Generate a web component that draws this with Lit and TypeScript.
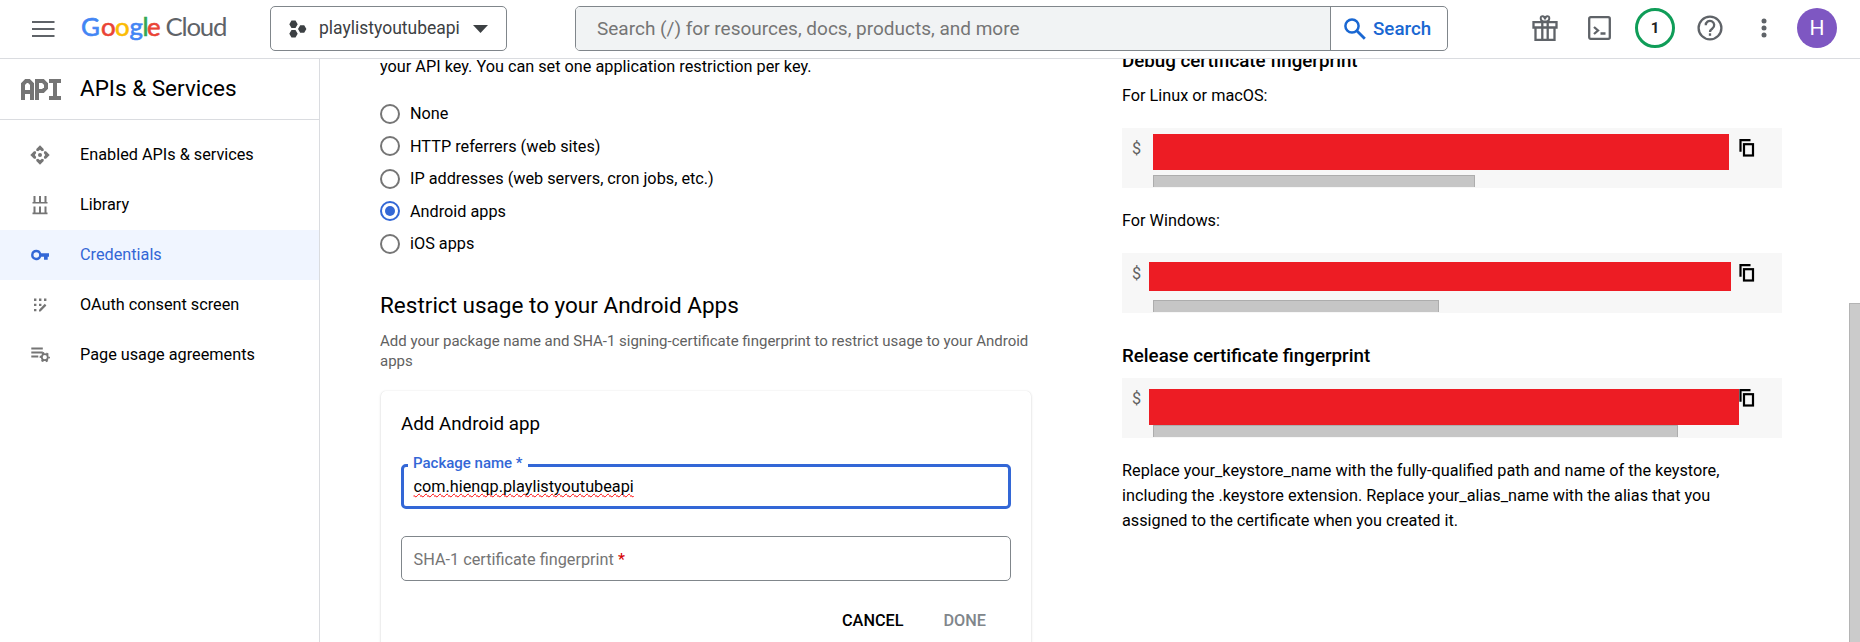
import { LitElement, html, css, svg } from "lit";
import { customElement } from "lit/decorators.js";
import { classMap } from "lit/directives/class-map.js";
import { styleMap } from "lit/directives/style-map.js";

const navIcons = {
  enabled: svg`<g fill="#757575"><circle cx="10" cy="10" r="2"/><path d="M10 .3 13.700 4v1.700L11.900 6.200 10 4.800 8.100 6.200 6.300 5.700V4z"/><path d="M10 19.700 13.700 16v-1.700l-1.800-.5-1.900 1.400-1.900-1.400-1.800.5V16z"/><path d="M.3 10 4 6.300h1.700l.5 1.800L4.800 10l1.400 1.900-.5 1.800H4z"/><path d="M19.700 10 16 6.300h-1.700l-.5 1.800 1.400 1.900-1.400 1.900.5 1.800H16z"/></g>`,
  library: svg`<g fill="#757575"><path d="M3.500 1h2v6h-2zM9 1h2v6H9zM14.500 1h2v6h-2zM2.500 7h15v1.600h-15zM3.500 11.600h2v6h-2zM9 11.600h2v6H9zM14.500 11.600h2v6h-2zM2.500 17.600h15v1.600h-15z"/></g>`,
  key: svg`<path fill="#3367d6" fill-rule="evenodd" d="M6.300 4.800a5.200 5.200 0 1 0 4.900 7h2.800v2.900h3.700v-2.900H19V8.200h-7.800a5.200 5.200 0 0 0-4.900-3.400zm0 2.400a2.800 2.800 0 1 1 0 5.600 2.800 2.800 0 0 1 0-5.600z"/>`,
  consent: svg`<g fill="#757575"><path d="M4 3.500h2.400v2.400H4zM9 3.500h2.400v2.400H9zM14 3.500h2.400v2.400H14zM4 8.700h2.400v2.400H4zM9 8.700h2.400v2.400H9zM4 13.900h2.400v2.400H4z"/><path d="m9 14.800 5.800-6 1.600 1.600-5.900 6H9z"/></g>`,
  agreements: svg`<g fill="#757575"><path d="M1.300 2.600h11.500v2H1.300zM1.300 6.600h11.500v2H1.300zM1.300 10.600h7v2h-7z"/></g><circle cx="14.800" cy="12.200" r="3" fill="none" stroke="#757575" stroke-width="1.800"/><circle cx="14.800" cy="12.200" r="4.300" fill="none" stroke="#757575" stroke-width="1.700" stroke-dasharray="2.200 2.300" stroke-dashoffset="1.100"/>`,
};

const navItems = [
  { icon: navIcons.enabled, label: "Enabled APIs & services" },
  { icon: navIcons.library, label: "Library" },
  { icon: navIcons.key, label: "Credentials", active: true },
  { icon: navIcons.consent, label: "OAuth consent screen" },
  { icon: navIcons.agreements, label: "Page usage agreements" },
];

@customElement("top-bar")
class TopBar extends LitElement {
  static styles = css`
    :host { display: flex; height: 58px; flex: none; border-bottom: 1px solid #dadce0; background: #fff; color: #3c4043; padding: 0 23px 0 28px; }
    svg { display: block; flex: none; }
    .menu { margin-top: 14px; }
    .logo { margin: 10px 0 0 22px; font-family: Lato, sans-serif; overflow: visible; }
    .picker { box-sizing: border-box; width: 237px; height: 45px; margin: 6px 0 0 40px; border: 1px solid #80868b; border-radius: 5px; display: flex; align-items: center; padding: 0 18px; }
    .project { font-size: 17.500px; margin-left: 12px; flex: 1; line-height: 24px; margin-top: -2px; white-space: nowrap; }
    .search { box-sizing: border-box; width: 873px; height: 45px; margin: 6px 0 0 68px; border: 1px solid #80868b; border-radius: 5px; display: flex; overflow: hidden; }
    .query { flex: 1; background: #f1f3f4; border-right: 1px solid #80868b; padding-left: 21px; font-size: 19px; line-height: 43px; color: #757575; }
    .go { width: 116px; display: flex; align-items: center; color: #1967d2; font-size: 18.750px; font-weight: 500; padding-left: 13px; box-sizing: border-box; gap: 7px; }
    .tools { margin-left: auto; display: flex; align-items: center; height: 56px; }
    .quota { box-sizing: border-box; width: 40px; height: 40px; border: 3px solid #0f9d58; border-radius: 50%; text-align: center; line-height: 34px; font-size: 15px; font-weight: 700; color: #202124; margin: 0 22px 0 24px; }
    .avatar { width: 40px; height: 40px; border-radius: 50%; background: #7e57c2; color: #fff; text-align: center; line-height: 41px; font-size: 21px; margin-left: 30px; }
    .gift { margin-right: 30px; }
    .dots { margin-left: 38px; }
  `;
  render() {
    return html`
      <svg class="menu" width="30" height="30" viewBox="0 0 30 30"><path d="M4 7h22.500v2H4zM4 14h22.500v2H4zM4 21h22.500v2H4z" fill="#5f6368"/></svg>
      <svg class="logo" width="150" height="38" viewBox="0 0 150 38" font-size="25.800">
        <g stroke-width=".6"><text x="1" y="26" fill="#4285f4" stroke="#4285f4">G</text>
        <text x="21" y="26" fill="#ea4335" stroke="#ea4335">o</text>
        <text x="35" y="26" fill="#fbbc04" stroke="#fbbc04">o</text>
        <text x="49.500" y="26" fill="#4285f4" stroke="#4285f4">g</text>
        <text x="62.600" y="26" fill="#34a853" stroke="#34a853">l</text>
        <text x="67" y="26" fill="#ea4335" stroke="#ea4335">e</text></g>
        <text x="85.500" y="26" fill="#5f6368" textLength="62" lengthAdjust="spacing">Cloud</text>
      </svg>
      <div class="picker">
        <svg width="18" height="18" viewBox="0 0 18 18" fill="#3c4043"><path d="M2.500.5h4L8.700 4.200 6.500 8h-4L.3 4.200zM2.500 10h4l2.200 3.700-2.200 3.800h-4L.3 13.700zM11.200 5.200h4l2.200 3.800-2.200 3.700h-4L9 9z"/></svg>
        <span class="project">playlistyoutubeapi</span>
        <svg width="15" height="8" viewBox="0 0 15 8"><path d="M0 0h15L7.500 8z" fill="#3c4043"/></svg>
      </div>
      <div class="search">
        <div class="query">Search (/) for resources, docs, products, and more</div>
        <div class="go">
          <svg width="22" height="22" viewBox="0 0 22 22" fill="none" stroke="#1967d2" stroke-width="2.500"><circle cx="8" cy="8" r="6.600"/><path d="m12.800 12.800 8 8" stroke-width="2.800"/></svg>
          <span>Search</span>
        </div>
      </div>
      <div class="tools">
        <svg class="gift" width="26" height="28" viewBox="0 0 26 28" fill="none" stroke="#5f6368" stroke-width="2.300"><path d="M1.500 8.200h23v5.300h-23zM3.500 13.500h19v12.300h-19zM10.300 8v17.500M15.700 8v17.500"/><path d="M13 7.500C11 7.500 8.700 6.500 8.700 4.200c0-3 4.300-2.600 4.300 1.300 0-3.900 4.300-4.300 4.300-1.300 0 2.300-2.300 3.300-4.300 3.300z" stroke-width="2"/></svg>
        <svg width="23" height="24" viewBox="0 0 23 24" fill="none" stroke="#5f6368" stroke-width="2.300"><rect x="1.200" y="1.200" width="20.600" height="21.600" rx="1.500"/><path d="m6 11 4 3.500L6 18M12.500 17.500h5"/></svg>
        <div class="quota">1</div>
        <svg width="26" height="26" viewBox="0 0 26 26" fill="none" stroke="#5f6368" stroke-width="2.300"><circle cx="13" cy="13" r="11.400"/><path d="M8.800 10.300a4.200 4.200 0 1 1 6.700 3.100c-1.500 1.100-2.500 1.800-2.500 3.600"/><path d="M13 18.300v2.500"/></svg>
        <svg class="dots" width="6" height="20" viewBox="0 0 6 20" fill="#5f6368"><circle cx="3" cy="3" r="2.500"/><circle cx="3" cy="10" r="2.500"/><circle cx="3" cy="17" r="2.500"/></svg>
        <div class="avatar">H</div>
      </div>`;
  }
}

@customElement("side-nav")
class SideNav extends LitElement {
  static styles = css`
    :host { display: block; width: 319px; flex: none; border-right: 1px solid #dadce0; font-size: 16.250px; }
    .head { display: flex; align-items: center; height: 60px; border-bottom: 1px solid #dadce0; padding-left: 21px; margin-bottom: 10px; }
    .title { font-size: 22.500px; margin-left: 19px; margin-top: -3px; }
    .item { display: flex; align-items: center; height: 50px; padding-left: 30px; gap: 30px; }
    .label { margin-top: -1px; }
    .active { background: #f0f5ff; color: #3367d6; }
    svg { display: block; }
  `;
  render() {
    return html`
      <div class="head">
        <svg width="40" height="21" viewBox="0 0 40 21" fill="none" stroke="#757575" stroke-width="4"><path d="M2 21V5l3-3h3l3 3v16M2 13h9M16 21V2h6l3 3v4l-3 3h-6M28 2h12M34 2v17M28 19h12"/></svg>
        <span class="title">APIs &amp; Services</span>
      </div>
      ${navItems.map(i => html`<div class=${classMap({ item: true, active: !!i.active })}>
        <svg width="20" height="20" viewBox="0 0 20 20">${i.icon}</svg><span class="label">${i.label}</span></div>`)}`;
  }
}

@customElement("restriction-form")
class RestrictionForm extends LitElement {
  static styles = css`
    :host { display: block; width: 651px; flex: none; margin-left: 60px; font-size: 16.250px; }
    .intro { line-height: 25px; margin: -5px 0 18.500px; }
    .option { display: flex; align-items: center; height: 32.500px; gap: 10px; }
    .radio { box-sizing: border-box; width: 20px; height: 20px; border: 2px solid #757575; border-radius: 50%; display: flex; }
    .radio.on { border-color: #3367d6; }
    .radio.on::after { content: ""; width: 10px; height: 10px; border-radius: 50%; background: #3367d6; margin: auto; }
    .heading { font-size: 22.500px; line-height: 30px; margin-top: 30px; }
    .hint { font-size: 15px; line-height: 20px; color: #616161; margin-top: 11px; }
    .card { margin: 20px 0 0 1px; height: 300px; border-radius: 5px; box-shadow: 0 1px 3px rgba(0,0,0,.16), 0 0 1px rgba(0,0,0,.12); padding: 21px 20px 0 20px; }
    .subtitle { font-size: 18.750px; line-height: 24px; }
    .field { box-sizing: border-box; height: 45px; margin: 0 0 28px; padding: 0 11.500px; border: 1px solid #80868b; border-radius: 5px; line-height: 46px; color: #757575; }
    .focused { height: 55px; margin: 18px 0 27px; border: 3px solid #3367d6; padding: 0 9.500px; color: #202124; line-height: 22px; }
    .focused legend { font-size: 15px; line-height: 18px; font-weight: 500; color: #3367d6; margin-left: -5.500px; padding: 0 5px 4px; }
    .value { display: block; color: #000; text-decoration: red wavy underline 1.300px; text-underline-offset: 1px; text-decoration-skip-ink: none; }
    .req { color: #d50000; }
    .actions { display: flex; justify-content: flex-end; gap: 40px; padding-right: 25px; font-weight: 500; line-height: 24px; }
    .done { color: #80868b; }
  `;
  render() {
    const options = ["None", "HTTP referrers (web sites)", "IP addresses (web servers, cron jobs, etc.)", "Android apps", "iOS apps"];
    return html`
      <div class="intro">your API key. You can set one application restriction per key.</div>
      ${options.map((o, n) => html`<div class="option"><span class=${classMap({ radio: true, on: n === 3 })}></span><span>${o}</span></div>`)}
      <div class="heading">Restrict usage to your Android Apps</div>
      <div class="hint">Add your package name and SHA-1 signing-certificate fingerprint to restrict usage to your Android apps</div>
      <div class="card">
        <div class="subtitle">Add Android app</div>
        <fieldset class="field focused"><legend>Package name *</legend><span class="value">com.hienqp.playlistyoutubeapi</span></fieldset>
        <div class="field">SHA-1 certificate fingerprint <span class="req">*</span></div>
        <div class="actions"><span>CANCEL</span><span class="done">DONE</span></div>
      </div>`;
  }
}

@customElement("command-block")
class CommandBlock extends LitElement {
  static properties = { mask: { type: Object }, thumb: { type: Number } };
  declare mask: { lead: number; top: number; width: number; height: number };
  declare thumb: number;
  static styles = css`
    :host { display: flex; height: 60px; background: #f7f7f7; position: relative; box-sizing: border-box; }
    .prompt { width: 31px; box-sizing: border-box; padding: 11px 0 0 10px; font-size: 16.250px; line-height: 20px; color: #616161; }
    .code { flex: 1; display: flex; align-items: flex-end; padding-bottom: 1px; }
    .thumb { box-sizing: border-box; height: 12px; background: #c6c6c6; border: 1px solid #adadad; border-bottom: 0; }
    .mask { position: absolute; background: #ed1c24; }
    .copy { margin: 11px 26px 0 0; flex: none; position: relative; z-index: 1; }
  `;
  render() {
    const m = this.mask;
    return html`<div class="prompt">$</div>
      <div class="code"><div class="thumb" style=${styleMap({ width: this.thumb + "px" })}></div></div>
      <svg class="copy" width="17" height="18" viewBox="0 0 17 18" fill="none" stroke="#000" stroke-width="2.200"><path d="M11.500 1.200H1.500v11.500"/><rect x="5" y="5.200" width="9" height="11.300"/></svg>
      <div class="mask" style=${styleMap({ left: m.lead + "px", top: m.top + "px", width: m.width + "px", height: m.height + "px" })}></div>`;
  }
}

@customElement("fingerprint-help")
class FingerprintHelp extends LitElement {
  static styles = css`
    :host { display: block; width: 660px; flex: none; margin-left: 91px; font-size: 16.250px; line-height: 25px; }
    .strong { font-size: 18.750px; font-weight: 500; }
    .debug { margin-top: -10px; }
    .linux { margin: 9px 0 20px; }
    .windows { margin: 20px 0; }
    .release { margin: 31px 0 9px; }
    .note { margin-top: 20px; width: 620px; }
  `;
  render() {
    return html`
      <div class="strong debug">Debug certificate fingerprint</div>
      <div class="linux">For Linux or macOS:</div>
      <command-block .mask=${{ lead: 31, top: 6, width: 576, height: 36 }} .thumb=${322}></command-block>
      <div class="windows">For Windows:</div>
      <command-block .mask=${{ lead: 27, top: 9, width: 582, height: 29 }} .thumb=${286}></command-block>
      <div class="strong release">Release certificate fingerprint</div>
      <command-block .mask=${{ lead: 27, top: 11, width: 590, height: 36 }} .thumb=${525}></command-block>
      <div class="note">Replace your_keystore_name with the fully-qualified path and name of the keystore, including the .keystore extension. Replace your_alias_name with the alias that you assigned to the certificate when you created it.</div>`;
  }
}

@customElement("app-root")
class AppRoot extends LitElement {
  static styles = css`
    :host { display: flex; flex-direction: column; width: 1860px; height: 642px; overflow: hidden; background: #fff; color: #000; font-family: Roboto, sans-serif; }
    .body { display: flex; flex: 1; min-height: 0; overflow: hidden; }
    .scroll { margin-left: auto; width: 11px; box-sizing: border-box; margin-top: 244px; background: #cbcbcb; border: solid #b4b4b4; border-width: 1px 0 0 1px; }
  `;
  render() {
    return html`<top-bar></top-bar>
      <div class="body">
        <side-nav></side-nav>
        <restriction-form></restriction-form>
        <fingerprint-help></fingerprint-help>
        <div class="scroll"></div>
      </div>`;
  }
}
